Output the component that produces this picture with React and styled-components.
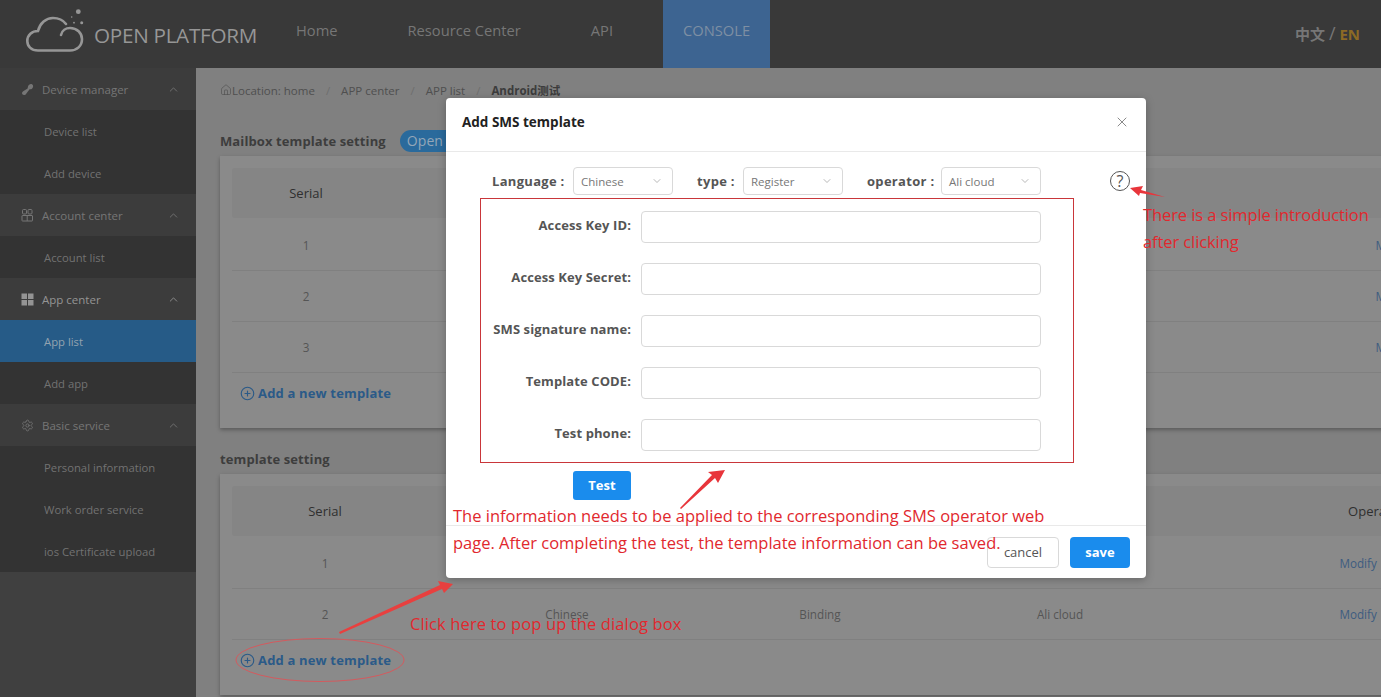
import React from 'react'
import styled, { createGlobalStyle } from 'styled-components'
import { Settings, ChevronUp, ChevronDown, Home, X, CirclePlus } from 'lucide-react'

const DeviceIcon = () => (
  <svg width="13" height="13" viewBox="0 0 13 13" fill="currentColor">
    <path d="M7 3.5 C7.5 1.5 9.5 0.5 11 1.2 C12.4 2 12.6 4 11.2 5.4 C10.4 6.2 9.4 6.4 8.6 6.2 L5.4 10.4 C4.6 12 2.8 12.6 1.6 11.6 C0.6 10.6 1 9 2.2 8.2 L6.6 5.4 C6.8 4.8 6.8 4.2 7 3.5 Z" />
  </svg>
)

const AccountIcon = () => (
  <svg width="13" height="13" viewBox="0 0 13 13" fill="none" stroke="currentColor" strokeWidth="1">
    <rect x="1.5" y="0.5" width="4" height="4.5" rx="1" />
    <rect x="7" y="0.5" width="4" height="4.5" rx="1" />
    <rect x="1" y="6.5" width="10.5" height="5.5" rx="0.5" />
    <path d="M6.2 6.5 V12" />
  </svg>
)

const AppIcon = () => (
  <svg width="13" height="13" viewBox="0 0 13 13" fill="currentColor">
    <rect x="0.5" y="0.5" width="5.5" height="5.5" />
    <rect x="7" y="0.5" width="5.5" height="5.5" />
    <rect x="0.5" y="7" width="5.5" height="5.5" />
    <rect x="7" y="7" width="5.5" height="5.5" />
  </svg>
)

const ServiceIcon = () => <Settings size={13} strokeWidth={1.5} />

const sideGroups = [
  { title: 'Device manager', icon: DeviceIcon, items: ['Device list', 'Add device'] },
  { title: 'Account center', icon: AccountIcon, items: ['Account list'] },
  { title: 'App center', icon: AppIcon, items: ['App list', 'Add app'], active: true },
  { title: 'Basic service', icon: ServiceIcon, items: ['Personal information', 'Work order service', 'ios Certificate upload'] },
]

const fields = ['Access Key ID:', 'Access Key Secret:', 'SMS signature name:', 'Template CODE:', 'Test phone:']
const mailColumns = '148px 300px 250px 250px 476px'
const smsColumns = '186px 298px 208px 272px 372px'

function TemplateTable({ columns, rows }) {
  return (
    <Card>
      <HeadRow $columns={columns}>
        <span>Serial</span>
        <span>Language</span>
        <span>Type</span>
        <span>Operator</span>
        <span>Operations</span>
      </HeadRow>
      {rows.map((row, i) => (
        <Row key={i} $columns={columns}>
          <span>{i + 1}</span>
          <span>{row[0]}</span>
          <span>{row[1]}</span>
          <span>{row[2]}</span>
          <ActionCell>Modify | Delete</ActionCell>
        </Row>
      ))}
      <AddLink>
        <CirclePlus size={15} strokeWidth={1.8} />
        Add a new template
      </AddLink>
    </Card>
  )
}

function Select({ value }) {
  return (
    <SelectBox>
      {value}
      <ChevronDown size={12} strokeWidth={1.4} color="#999" />
    </SelectBox>
  )
}

export default function App() {
  return (
    <Page>
      <GlobalStyle />
      <Header>
        <Logo>
          <svg width="62" height="46" viewBox="0 0 62 46" fill="none" stroke="#969696" strokeWidth="2.6" strokeLinecap="round">
            <path d="M36 26 C37 21.5 41 19 45 19 C52 19 57 24 57 30 C57 37 52 41.5 45 41.5 H13 C6 41.5 2.3 37 2.3 32 C2.3 26 7 22 13 22 C15 14 21 9 28 9 C33 9 38 11 41 15" />
            <g fill="#969696" stroke="none">
              <circle cx="53.3" cy="2.7" r="2.4" />
              <circle cx="46.7" cy="8" r="0.8" />
              <circle cx="56.7" cy="13.7" r="1.5" />
              <circle cx="49" cy="13.7" r="0.9" />
            </g>
          </svg>
          <LogoText>OPEN PLATFORM</LogoText>
        </Logo>
        <Nav>
          <NavItem>Home</NavItem>
          <NavItem>Resource Center</NavItem>
          <NavItem>API</NavItem>
          <NavItem $active>CONSOLE</NavItem>
        </Nav>
        <Lang>
          中文 <Slash>/</Slash> <LangActive>EN</LangActive>
        </Lang>
      </Header>

      <Body>
        <Sidebar>
          {sideGroups.map(group => (
            <div key={group.title}>
              <GroupRow $active={group.active}>
                <group.icon />
                <GroupTitle>{group.title}</GroupTitle>
                <ChevronUp size={13} strokeWidth={1.6} />
              </GroupRow>
              {group.items.map(item => (
                <SideItem key={item} $selected={item === 'App list'}>
                  {item}
                </SideItem>
              ))}
            </div>
          ))}
        </Sidebar>

        <Main>
          <Crumbs>
            <Home size={12} strokeWidth={1.3} />
            <span>Location: home</span>
            <CrumbSep>/</CrumbSep>
            <span>APP center</span>
            <CrumbSep>/</CrumbSep>
            <span>APP list</span>
            <CrumbSep>/</CrumbSep>
            <CrumbLast>Android测试</CrumbLast>
          </Crumbs>

          <SectionTitle>
            Mailbox template setting
            <OpenPill>Open</OpenPill>
          </SectionTitle>
          <TemplateTable
            columns={mailColumns}
            rows={[
              ['Chinese', 'Register', 'SMTP'],
              ['Chinese', 'Binding', 'SMTP'],
              ['English', 'Register', 'SMTP'],
            ]}
          />

          <SectionTitle $second>template setting</SectionTitle>
          <TemplateTable
            columns={smsColumns}
            rows={[
              ['Chinese', 'Register', 'Ali cloud'],
              ['Chinese', 'Binding', 'Ali cloud'],
            ]}
          />
        </Main>
      </Body>

      <Modal>
        <ModalHead>
          <ModalTitle>Add SMS template</ModalTitle>
          <X size={16} strokeWidth={1.3} color="#777" />
        </ModalHead>
        <ModalBody>
          <SelectRow>
            <SelectLabel $width={73}>Language :</SelectLabel>
            <Select value="Chinese" />
            <SelectLabel $width={38}>type :</SelectLabel>
            <Select value="Register" />
            <SelectLabel $width={66}>operator :</SelectLabel>
            <Select value="Ali cloud" />
            <HelpMark>?</HelpMark>
          </SelectRow>
          <FieldBox>
            {fields.map(label => (
              <FieldRow key={label}>
                <FieldLabel>{label}</FieldLabel>
                <FieldInput />
              </FieldRow>
            ))}
          </FieldBox>
          <TestButton>Test</TestButton>
        </ModalBody>
        <ModalFoot>
          <CancelButton>cancel</CancelButton>
          <SaveButton>save</SaveButton>
        </ModalFoot>
      </Modal>

      <Marks width="1381" height="697" viewBox="0 0 1381 697">
        <polygon points="1130,188 1143,186 1141,190 1165,197 1140,193 1139,196" fill="#e8353b" />
        <polygon points="725,470 718,483 715,478 681,509 680,508 712,475 708,472" fill="#e8353b" />
        <polygon points="453,584 444,593 442,589 340,634 339,632 440,585 438,581" fill="#e8403f" />
        <ellipse cx="320" cy="660" rx="84" ry="21.5" fill="none" stroke="#d45a5e" strokeWidth="1" />
      </Marks>
      <Note $x={1143} $y={201} $track={-0.1}>
        There is a simple introduction
        <br />
        after clicking
      </Note>
      <Note $x={453} $y={502}>
        The information needs to be applied to the corresponding SMS operator web
        <br />
        page. After completing the test, the template information can be saved.
      </Note>
      <Note $x={410} $y={610} $track={0.12}>
        Click here to pop up the dialog box
      </Note>
    </Page>
  )
}

const GlobalStyle = createGlobalStyle`
  html, body {
    margin: 0;
    padding: 0;
    background: #808080;
  }
  body {
    font-family: "Open Sans", "Noto Sans CJK SC", sans-serif;
  }
  * {
    box-sizing: border-box;
  }
`

const Page = styled.div`
  position: relative;
  width: 1381px;
  height: 697px;
  overflow: hidden;
  display: flex;
  flex-direction: column;
`

const Header = styled.header`
  height: 68px;
  flex: none;
  display: flex;
  background: #393939;
`
const Logo = styled.div`
  width: 276px;
  padding: 9px 0 0 25px;
  display: flex;
  align-items: flex-start;
  gap: 7px;
`
const LogoText = styled.span`
  margin-top: 12px;
  font-size: 20.7px;
  color: #969696;
  letter-spacing: -0.3px;
  white-space: nowrap;
`
const Nav = styled.nav`
  display: flex;
  gap: 30px;
`
const NavItem = styled.a`
  padding: 20px 20px 0;
  font-size: 14.7px;
  color: ${p => (p.$active ? '#7e8fa3' : '#767676')};
  background: ${p => (p.$active ? '#3d6491' : 'transparent')};
`
const Lang = styled.div`
  margin-left: auto;
  padding: 23px 21px 0 0;
  font-size: 15px;
  font-weight: 700;
  color: #767676;
`
const Slash = styled.span`
  font-size: 18px;
  font-weight: 400;
  line-height: 1;
`
const LangActive = styled.span`
  color: #8c6a25;
`

const Body = styled.div`
  flex: 1;
  min-height: 0;
  display: flex;
`
const Sidebar = styled.aside`
  width: 196px;
  flex: none;
  background: #404040;
`
const GroupRow = styled.div`
  height: 42px;
  padding: 0 16px 0 21px;
  display: flex;
  align-items: center;
  gap: 8px;
  font-size: 11.5px;
  background: #3c3c3c;
  color: ${p => (p.$active ? '#949494' : '#767676')};
`
const GroupTitle = styled.span`
  flex: 1;
`
const SideItem = styled.div`
  height: 42px;
  padding-left: 44px;
  display: flex;
  align-items: center;
  font-size: 11.3px;
  color: ${p => (p.$selected ? '#94a3b0' : '#727272')};
  background: ${p => (p.$selected ? '#265b87' : '#333333')};
`

const Main = styled.main`
  flex: 1;
  min-width: 0;
  padding: 14px 0 0 24px;
  background: #808080;
`
const Crumbs = styled.div`
  height: 16px;
  display: flex;
  align-items: center;
  font-size: 11.5px;
  color: #4f4f4f;
  white-space: nowrap;
`
const CrumbSep = styled.span`
  margin: 0 11px;
  color: #6e6e6e;
`
const CrumbLast = styled.span`
  font-weight: 700;
  color: #3c3c3c;
`
const SectionTitle = styled.h3`
  height: ${p => (p.$second ? '20px' : '24px')};
  margin: ${p => (p.$second ? '21px 0 5px' : '31px 0 3px')};
  display: flex;
  align-items: center;
  gap: 14px;
  font-size: 13px;
  font-weight: 700;
  letter-spacing: 0.1px;
  color: #3d3d3d;
`
const OpenPill = styled.span`
  width: 70px;
  height: 22px;
  padding-left: 7px;
  border-radius: 11px;
  font-size: 14px;
  font-weight: 400;
  line-height: 22px;
  color: #93a6b8;
  background: #2a6a9c;
`
const Card = styled.section`
  width: 1500px;
  padding: 12px 12px 15px;
  background: #8a8a8a;
  box-shadow: 0 2px 4px rgba(0, 0, 0, 0.3);
`
const HeadRow = styled.div`
  height: 50px;
  margin-bottom: 2px;
  display: grid;
  grid-template-columns: ${p => p.$columns};
  align-items: center;
  justify-items: center;
  font-size: 13px;
  color: #2f2f2f;
  background: #858585;
  border-radius: 3px;
`
const Row = styled.div`
  height: 51px;
  padding-bottom: 1px;
  display: grid;
  grid-template-columns: ${p => p.$columns};
  align-items: center;
  justify-items: center;
  font-size: 11.7px;
  color: #555;
  border-bottom: 1px solid #808080;
`
const ActionCell = styled.span`
  color: #3d5c80;
`
const AddLink = styled.a`
  height: 40px;
  padding-left: 8px;
  display: flex;
  align-items: center;
  gap: 3px;
  font-size: 13px;
  font-weight: 700;
  letter-spacing: 0.16px;
  color: #2b5a88;
`

const Modal = styled.div`
  position: absolute;
  left: 446px;
  top: 98px;
  width: 700px;
  height: 480px;
  display: flex;
  flex-direction: column;
  background: #fff;
  border-radius: 4px;
  box-shadow: 0 2px 8px rgba(0, 0, 0, 0.25);
`
const ModalHead = styled.div`
  height: 54px;
  padding: 0 16px 6px 16px;
  display: flex;
  align-items: center;
  justify-content: space-between;
  border-bottom: 1px solid #e9e9e9;
`
const ModalTitle = styled.span`
  font-size: 13.5px;
  font-weight: 700;
  color: #222;
`
const ModalBody = styled.div`
  flex: 1;
  padding: 15px 0 0 34px;
`
const SelectRow = styled.div`
  position: relative;
  width: 640px;
  height: 28px;
  padding-left: 12px;
  display: flex;
  align-items: center;
`
const SelectLabel = styled.span`
  width: ${p => p.$width}px;
  margin: 0 8px 0 24px;
  font-size: 13px;
  font-weight: 700;
  letter-spacing: 0.3px;
  color: #555;
  white-space: nowrap;
  &:first-child {
    margin-left: 0;
  }
`
const SelectBox = styled.div`
  width: 100px;
  height: 28px;
  padding: 0 9px 0 7px;
  display: flex;
  align-items: center;
  justify-content: space-between;
  font-size: 11.5px;
  color: #777;
  border: 1px solid #d9d9d9;
  border-radius: 4px;
`
const HelpMark = styled.span`
  position: absolute;
  left: 630px;
  top: 4px;
  width: 20px;
  height: 20px;
  border: 1px solid #555;
  border-radius: 50%;
  font-size: 16px;
  line-height: 18px;
  text-align: center;
  color: #555;
`
const FieldBox = styled.div`
  width: 594px;
  height: 265px;
  margin-top: 3px;
  padding-top: 12px;
  border: 1px solid #c9363a;
`
const FieldRow = styled.div`
  height: 52px;
  display: flex;
  align-items: flex-start;
`
const FieldLabel = styled.span`
  width: 150px;
  padding-top: 5px;
  font-size: 13px;
  font-weight: 700;
  letter-spacing: 0.1px;
  line-height: 18px;
  text-align: right;
  color: #555;
  white-space: nowrap;
`
const FieldInput = styled.div`
  width: 400px;
  height: 32px;
  margin-left: 10px;
  border: 1px solid #d9d9d9;
  border-radius: 4px;
`
const TestButton = styled.button`
  display: block;
  width: 58px;
  height: 29px;
  margin: 8px 0 0 93px;
  padding: 0 0 2px;
  border: 0;
  border-radius: 3px;
  font: 700 13px "Open Sans", sans-serif;
  color: #fff;
  background: #1a8ced;
`
const ModalFoot = styled.div`
  height: 53px;
  padding: 11px 16px 0 0;
  display: flex;
  justify-content: flex-end;
  align-items: flex-start;
  gap: 11px;
  border-top: 1px solid #e9e9e9;
`
const CancelButton = styled.button`
  width: 72px;
  height: 31px;
  padding: 0 0 2px;
  border: 1px solid #d9d9d9;
  border-radius: 4px;
  font: 13px "Open Sans", sans-serif;
  color: #555;
  background: #fff;
`
const SaveButton = styled.button`
  width: 60px;
  height: 31px;
  padding: 0 0 2px;
  border: 0;
  border-radius: 4px;
  font: 700 13px "Open Sans", sans-serif;
  color: #fff;
  background: #1a8ced;
`

const Marks = styled.svg`
  position: absolute;
  left: 0;
  top: 0;
  pointer-events: none;
`
const Note = styled.div`
  position: absolute;
  left: ${p => p.$x}px;
  top: ${p => p.$y}px;
  font-size: 16.5px;
  letter-spacing: ${p => p.$track || 0}px;
  line-height: 27px;
  color: #e1282e;
  white-space: nowrap;
`
